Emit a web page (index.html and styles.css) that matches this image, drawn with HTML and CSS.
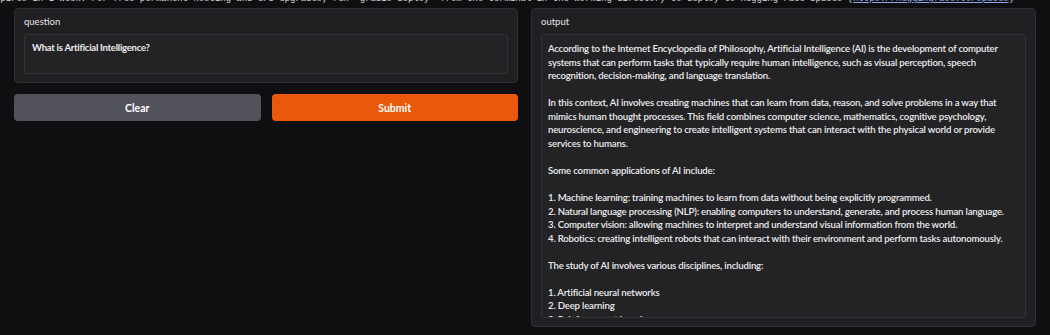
FILE: index.html
```html
<!DOCTYPE html>
<html lang="en">
<head>
    <meta charset="UTF-8">
    <meta name="viewport" content="width=device-width, initial-scale=1.0">
    <title>Gradio</title>
    <link rel="stylesheet" href="styles.css">
</head>
<body>
    <div class="notice">xpires in 1 week. For free permanent hosting and GPU upgrades, run `gradio deploy` from the terminal in the working directory to deploy to Hugging Face Spaces (<a href="#">https://huggingface.co/spaces</a>)</div>
    <div class="app">
        <div class="col">
            <div class="block">
                <label class="label">question</label>
                <div class="box input-box">What is Artificial Intelligence?</div>
            </div>
            <div class="buttons">
                <button class="btn btn-secondary">Clear</button>
                <button class="btn btn-primary">Submit</button>
            </div>
        </div>
        <div class="col">
            <div class="block block-output">
                <label class="label">output</label>
                <div class="box output-box">According to the Internet Encyclopedia of Philosophy, Artificial Intelligence (AI) is the development of computer
systems that can perform tasks that typically require human intelligence, such as visual perception, speech
recognition, decision-making, and language translation.

In this context, AI involves creating machines that can learn from data, reason, and solve problems in a way that
mimics human thought processes. This field combines computer science, mathematics, cognitive psychology,
neuroscience, and engineering to create intelligent systems that can interact with the physical world or provide
services to humans.

Some common applications of AI include:

1. Machine learning: training machines to learn from data without being explicitly programmed.
2. Natural language processing (NLP): enabling computers to understand, generate, and process human language.
3. Computer vision: allowing machines to interpret and understand visual information from the world.
4. Robotics: creating intelligent robots that can interact with their environment and perform tasks autonomously.

The study of AI involves various disciplines, including:

1. Artificial neural networks
2. Deep learning
3. Reinforcement learning
4. Natural language processing</div>
            </div>
        </div>
    </div>
</body>
</html>
```

FILE: styles.css
```css
body {
    margin: 0;
    background-color: #0f0f11;
    font-family: Lato, "Noto Sans", sans-serif;
    color: #e4e4e7;
    overflow: hidden;
}

.notice {
    font-family: "Liberation Mono", monospace;
    font-size: 8.95px;
    line-height: 10px;
    color: #d4d4d8;
    white-space: pre;
    margin-top: -6px;
    margin-left: -5px;
    height: 14px;
}

.notice a {
    color: #8ea8e8;
}

.app {
    display: grid;
    grid-template-columns: 504px 505px;
    gap: 13px;
    padding: 0 14px;
}

.col {
    display: flex;
    flex-direction: column;
    gap: 11px;
}

.block {
    background-color: #202023;
    border: 1px solid #2f2f33;
    border-radius: 4px;
    padding: 8px 9px;
    display: flex;
    flex-direction: column;
}

.label {
    font-size: 9.5px;
    line-height: 10px;
    color: #e4e4e7;
    margin-bottom: 7px;
}

.box {
    background-color: #232326;
    border: 1px solid #333337;
    border-radius: 3px;
    color: #ececee;
}

.input-box {
    height: 24px;
    padding: 7px;
    font-weight: 700;
    font-size: 9.5px;
    letter-spacing: -0.25px;
}

.block-output {
    height: 301px;
}

.output-box {
    flex: 1;
    padding: 7px 6px 0;
    white-space: pre;
    overflow: hidden;
    font-size: 9.6px;
    line-height: 13.55px;
    font-weight: 600;
    letter-spacing: -0.18px;
}

.buttons {
    display: grid;
    grid-template-columns: 1fr 1fr;
    gap: 11px;
}

.btn {
    height: 27px;
    border: none;
    border-radius: 4px;
    font-family: Lato, "Noto Sans", sans-serif;
    font-size: 10.5px;
    font-weight: 700;
    color: #ffffff;
    cursor: pointer;
}

.btn-secondary {
    background-color: #52525b;
}

.btn-primary {
    background-color: #ea580c;
}
```
